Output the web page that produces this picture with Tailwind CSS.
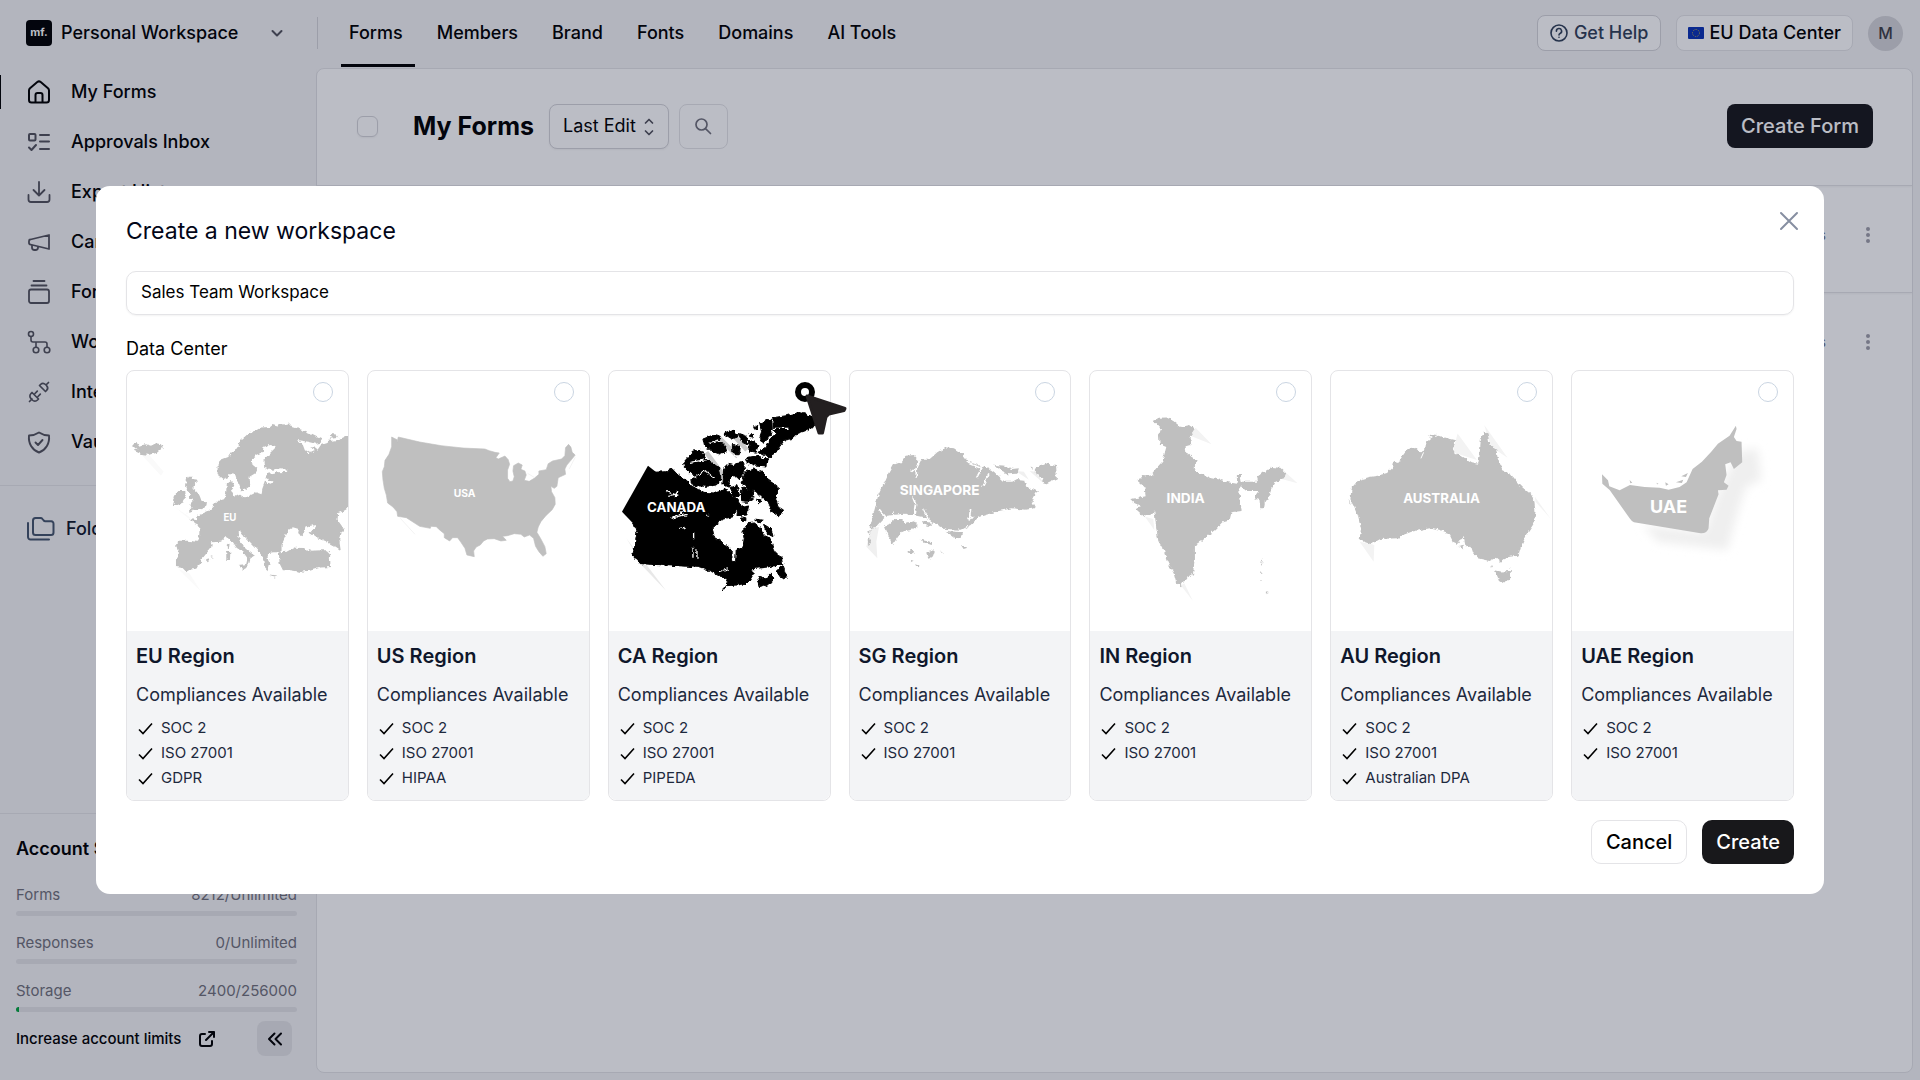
<!DOCTYPE html>
<html lang="en">

<head>
  <meta charset="UTF-8" />
  <meta name="viewport" content="width=device-width, initial-scale=1.0" />
  <title>My Forms - Create a new workspace</title>
  <script src="https://cdn.jsdelivr.net/npm/@tailwindcss/browser@4"></script>
</head>

<body class="font-['Inter',sans-serif] text-lg text-black bg-zinc-100">
  <div class="flex flex-col min-h-screen">
    <!-- Top bar -->
    <header class="flex items-center h-[68px] pb-[2px] shrink-0">
      <div class="flex items-center w-[317px] shrink-0 pl-[26px]">
        <span class="flex items-center justify-center size-[26px] rounded bg-black text-white text-[11px] font-bold">mf.</span>
        <button class="flex flex-1 items-center justify-between pl-[9px] pr-[32px] font-medium">
          <span>Personal Workspace</span>
          <svg class="size-4 text-zinc-600" viewBox="0 0 16 16" fill="none" stroke="currentColor" stroke-width="2" stroke-linecap="round" stroke-linejoin="round"><path d="M3.500 6 8 10.500 12.500 6" /></svg>
        </button>
      </div>
      <nav class="flex self-stretch items-center gap-[14px] font-medium">
        <span class="w-px h-8 bg-zinc-300 mr-[9px]"></span>
        <a href="#" class="relative pl-2 pr-3">Forms<span class="absolute left-0 right-0 top-[45px] h-[3px] bg-black"></span></a>
        <a href="#" class="pl-2 pr-3">Members</a>
        <a href="#" class="pl-2 pr-3">Brand</a>
        <a href="#" class="pl-2 pr-3">Fonts</a>
        <a href="#" class="pl-2 pr-3">Domains</a>
        <a href="#" class="pl-2 pr-3">AI Tools</a>
      </nav>
      <div class="flex items-center gap-[15px] ml-auto pr-[17px]">
        <button class="flex items-center gap-1.5 h-9 px-3 rounded-lg border border-zinc-300 bg-white text-slate-700 font-medium">
          <svg class="size-[18px]" viewBox="0 0 18 18" fill="none" stroke="currentColor" stroke-width="1.600" stroke-linecap="round"><circle cx="9" cy="9" r="8" /><path d="M6.400 7.200a2.600 2.600 0 1 1 3.700 2.300c-.8.400-1.100.8-1.100 1.400" /><path d="M9 13.200v.1" /></svg>
          Get Help
        </button>
        <button class="flex items-center gap-[5px] h-9 px-[11px] rounded-lg border border-zinc-200 bg-white font-medium">
          <svg class="w-4 h-3" viewBox="0 0 16 12"><rect width="16" height="12" rx="1" fill="#0b32b4" /><circle cx="8" cy="6" r="3.500" fill="none" stroke="#c9b44a" stroke-width="1" stroke-dasharray=".8 1.030" /></svg>
          EU Data Center
        </button>
        <span class="flex items-center justify-center size-[35px] rounded-full bg-zinc-300 text-base font-medium text-zinc-700">M</span>
      </div>
    </header>

    <div class="flex flex-1">
      <!-- Sidebar -->
      <aside class="flex flex-col w-[316px] shrink-0">
        <nav class="flex flex-col gap-4 pt-[7px] font-medium">
          <a href="#" class="flex items-center h-[34px] gap-5 pl-[26px] border-l border-black">
            <svg class="size-6" viewBox="0 0 24 24" fill="none" stroke="currentColor" stroke-width="2" stroke-linejoin="round"><path d="M2 10.500a3 3 0 0 1 1-2.200l7.300-6.200a2.600 2.600 0 0 1 3.400 0L21 8.300a3 3 0 0 1 1 2.200V20a2.500 2.500 0 0 1-2.500 2.500h-15A2.500 2.500 0 0 1 2 20z" /><path d="M8.500 22.500V15a2 2 0 0 1 2-2h3a2 2 0 0 1 2 2v7.500" /></svg>
            My Forms
          </a>
          <a href="#" class="flex items-center h-[34px] gap-5 pl-[27px]">
            <svg class="size-6 text-zinc-600" viewBox="0 0 24 24" fill="none" stroke="currentColor" stroke-width="2" stroke-linecap="round" stroke-linejoin="round"><rect x="2" y="4" width="6.500" height="6.500" rx="1" /><path d="M13 5h9M13 11.500h9M13 19h9M2 17.500l2.500 2.500 4.500-5" /></svg>
            Approvals Inbox
          </a>
          <a href="#" class="flex items-center h-[34px] gap-5 pl-[27px]">
            <svg class="size-6 text-zinc-600" viewBox="0 0 24 24" fill="none" stroke="currentColor" stroke-width="1.800" stroke-linecap="round" stroke-linejoin="round"><path d="M12 2v13M6.500 10l5.500 5.500 5.500-5.500M1.500 15v4.500A2.500 2.500 0 0 0 4 22h16a2.500 2.500 0 0 0 2.500-2.500V15" /></svg>
            Export History
          </a>
          <a href="#" class="flex items-center h-[34px] gap-5 pl-[27px]">
            <svg class="size-6 text-zinc-600" viewBox="0 0 24 24" fill="none" stroke="currentColor" stroke-width="1.800" stroke-linejoin="round"><path d="M22 5v14L3.500 14.500a1.500 1.500 0 0 1-1.500-1.500v-2a1.500 1.500 0 0 1 1.500-1.500zM5 15v2.500A2.500 2.500 0 0 0 7.500 20h1a2.500 2.500 0 0 0 2.500-2.500v-1" /></svg>
            Campaigns
          </a>
          <a href="#" class="flex items-center h-[34px] gap-5 pl-[27px]">
            <svg class="size-6 text-zinc-600" viewBox="0 0 24 24" fill="none" stroke="currentColor" stroke-width="1.800" stroke-linecap="round"><path d="M6.500 1h11M4.500 5.500h15" /><rect x="2" y="9.500" width="20" height="13.500" rx="2" /></svg>
            Form Templates
          </a>
          <a href="#" class="flex items-center h-[34px] gap-5 pl-[27px]">
            <svg class="size-6 text-zinc-600" viewBox="0 0 24 24" fill="none" stroke="currentColor" stroke-width="1.600" stroke-linecap="round"><circle cx="4" cy="4" r="2.500" /><circle cx="9" cy="20" r="2.800" /><circle cx="20" cy="20" r="2.800" /><path d="M4 6.500V10a2 2 0 0 0 2 2h12a2 2 0 0 1 2 2v3M9 12v5" /></svg>
            Workflows
          </a>
          <a href="#" class="flex items-center h-[34px] gap-5 pl-[27px]">
            <svg class="size-6 text-zinc-600" viewBox="0 0 24 24" fill="none" stroke="currentColor" stroke-width="1.700" stroke-linecap="round" stroke-linejoin="round"><path d="m2.500 21.500 2.500-2.500M5 12.500l6.500 6.500-1 1a3.600 3.600 0 0 1-5.200 0l-1.300-1.300a3.600 3.600 0 0 1 0-5.200zM8 13.500l2.300-2.300M11 16.500l2.300-2.300" /><path d="m21.500 2.500-2.500 2.500M12.500 5.500l6 6 1-1a3.600 3.600 0 0 0 0-5l-1-1a3.600 3.600 0 0 0-5 0z" /></svg>
            Integrations
          </a>
          <a href="#" class="flex items-center h-[34px] gap-5 pl-[27px]">
            <svg class="size-6 text-zinc-600" viewBox="0 0 24 24" fill="none" stroke="currentColor" stroke-width="1.900" stroke-linecap="round" stroke-linejoin="round"><path d="M12 2.500c3 2 6.500 3 10 3 .8 8-3 14.500-10 17C5 20 1.200 13.500 2 5.500c3.500 0 7-1 10-3zM8.500 12.500l2.500 2.500 4.500-5" /></svg>
            Vault
          </a>
        </nav>
        <div class="mt-[26px] pt-[26px] border-t border-zinc-200 font-medium text-slate-900">
          <a href="#" class="flex items-center h-[34px] gap-[11px] pl-[27px]">
            <svg class="w-7 h-6 text-slate-600" viewBox="0 0 28 24" fill="none" stroke="currentColor" stroke-width="2" stroke-linecap="round" stroke-linejoin="round"><path d="M6 3.500A2.500 2.500 0 0 1 8.500 1h5a2.500 2.500 0 0 1 2 1l1.200 1.500a2 2 0 0 0 1.500.7h6A2.500 2.500 0 0 1 26.500 7v8.500A2.500 2.500 0 0 1 24 18H8.500A2.500 2.500 0 0 1 6 15.500zM1 6v14a2.500 2.500 0 0 0 2.500 2.500H22" /></svg>
            Folders
          </a>
        </div>

        <div class="mt-auto pt-5 pl-4 pr-[19px] pb-6 border-t border-zinc-200 text-[15px]/[24px] text-zinc-500">
          <h2 class="text-lg/[30px] font-semibold text-black">Account Summary</h2>
          <div class="flex justify-between mt-[19px]"><span>Forms</span><span>8212/Unlimited</span></div>
          <div class="mt-1 h-[5px] rounded-full bg-zinc-200"></div>
          <div class="flex justify-between mt-[15px]"><span>Responses</span><span>0/Unlimited</span></div>
          <div class="mt-1 h-[5px] rounded-full bg-zinc-200"></div>
          <div class="flex justify-between mt-[15px]"><span>Storage</span><span>2400/256000</span></div>
          <div class="mt-1 h-[5px] rounded-full bg-zinc-200 overflow-hidden"><div class="h-full bg-green-600" style="width: 1%"></div></div>
          <div class="flex items-center mt-[9px] text-black">
            <a href="#" class="flex items-center gap-[18px] font-medium">
              Increase account limits
              <svg class="size-4" viewBox="0 0 16 16" fill="none" stroke="currentColor" stroke-width="2" stroke-linecap="round" stroke-linejoin="round"><path d="M6 3H3a2 2 0 0 0-2 2v8a2 2 0 0 0 2 2h8a2 2 0 0 0 2-2v-3M10 1h5v5M15 1 7 9" /></svg>
            </a>
            <button aria-label="Collapse sidebar" class="flex items-center justify-center size-[35px] ml-auto mr-[5px] rounded-lg bg-zinc-200">
              <svg class="size-4" viewBox="0 0 16 16" fill="none" stroke="currentColor" stroke-width="2" stroke-linecap="round" stroke-linejoin="round"><path d="M7.500 2.500 2 8l5.500 5.500M14 2.500 8.500 8l5.500 5.500" /></svg>
            </button>
          </div>
        </div>
      </aside>

      <!-- Form list -->
      <main class="flex-1 mr-[7px] mb-[7px] rounded-lg border border-zinc-200 bg-white">
        <div class="flex items-center h-[117px] pl-10 pr-[39px] pb-[2px] border-b border-zinc-200 shadow-xs">
          <input type="checkbox" aria-label="Select all forms" class="appearance-none size-[21px] rounded-md border border-zinc-300 shadow-xs" />
          <h1 class="ml-[35px] mr-[15px] text-[25px] font-bold">My Forms</h1>
          <div class="relative">
            <select aria-label="Sort by" class="appearance-none h-[45px] w-[120px] pl-[13px] rounded-lg border border-zinc-300 bg-white shadow-xs text-black">
              <option>Last Edit</option>
            </select>
            <svg class="absolute right-3 top-[14px] w-4 h-[18px] pointer-events-none text-zinc-600" viewBox="0 0 16 18" fill="none" stroke="currentColor" stroke-width="1.700" stroke-linecap="round" stroke-linejoin="round"><path d="m4.500 5 3.500-3.500L11.500 5M4.500 13l3.500 3.500 3.500-3.500" /></svg>
          </div>
          <button aria-label="Search" class="flex items-center justify-center w-[49px] h-[45px] ml-[10px] rounded-lg border border-zinc-200 text-zinc-500">
            <svg class="size-[18px]" viewBox="0 0 18 18" fill="none" stroke="currentColor" stroke-width="1.700" stroke-linecap="round"><circle cx="7.500" cy="7.500" r="5.500" /><path d="m11.800 11.800 4.700 4.700" /></svg>
          </button>
          <button class="h-11 px-[14px] ml-auto rounded-lg bg-zinc-900 text-white text-xl font-medium">Create Form</button>
        </div>
        <div class="flex items-center justify-end gap-[34px] h-[107px] pr-9 pb-2 border-b border-zinc-200 shadow-xs text-sm text-zinc-500">
          <span>3 Drafts</span>
          <button aria-label="More"><svg class="w-4 h-[18px] text-zinc-400" viewBox="0 0 16 18" fill="currentColor"><circle cx="8" cy="3" r="2" /><circle cx="8" cy="9" r="2" /><circle cx="8" cy="15" r="2" /></svg></button>
        </div>
        <div class="flex items-center justify-end gap-[34px] h-[106px] pr-9 pb-2 text-sm text-zinc-500">
          <span>1 Drafts</span>
          <button aria-label="More"><svg class="w-4 h-[18px] text-zinc-400" viewBox="0 0 16 18" fill="currentColor"><circle cx="8" cy="3" r="2" /><circle cx="8" cy="9" r="2" /><circle cx="8" cy="15" r="2" /></svg></button>
        </div>
      </main>
    </div>
  </div>

  <!-- Create workspace dialog -->
  <div class="fixed inset-0 z-50 flex items-center justify-center bg-[#091230]/28">
    <form role="dialog" aria-labelledby="dialogTitle" class="relative w-[90%] p-[30px] rounded-[14px] bg-white">
      <h2 id="dialogTitle" class="text-[23px]/[30px] text-slate-950">Create a new workspace</h2>
      <button type="button" aria-label="Close" class="absolute right-[25px] top-[25px] text-[#868fa1]">
        <svg class="size-5" viewBox="0 0 20 20" fill="none" stroke="currentColor" stroke-width="2" stroke-linecap="round"><path d="m2 2 16 16M18 2 2 18" /></svg>
      </button>
      <input type="text" aria-label="Workspace name" value="Sales Team Workspace" class="block w-full h-11 mt-[25px] px-[14px] pb-[2px] rounded-[10px] border border-zinc-200 shadow-xs outline-none text-[17px]" />

      <fieldset class="mt-5">
        <legend class="text-lg/[27px]">Data Center</legend>
        <div class="grid grid-cols-7 gap-[18px] mt-2 text-slate-800">
          <label class="relative flex flex-col rounded-lg border border-zinc-200 overflow-hidden">
            <input type="radio" name="region" class="absolute right-[15px] top-[11px] appearance-none size-5 rounded-full border border-slate-300 bg-white" />
            <svg class="w-full h-[260px]" viewBox="18 18 663 780" fill="#bfbfbf">
              <path d="M60 268 120 332 128 320 85 270ZM160 425 205 455 215 470ZM172 612 240 680 205 625Z" fill="#fafafa" />
              <g filter="url(#coast)">
                <path d="M32 243 48 234 55 245 75 238 90 242 105 235 120 238 125 248 108 263 85 270 60 267 40 258 50 252Z" />
                <path d="M200 335 216 335 212 345 228 347 220 362 214 368 228 378 236 392 242 408 258 410 256 425 240 432 218 434 200 442 212 428 205 420 215 408 208 400 205 385 198 375 192 360Z" />
                <path d="M175 378 193 378 194 392 188 412 170 420 156 420 160 405 157 392 168 388Z" />
                <path d="M690 208 655 224 630 228 622 222 645 219 650 208 625 207 630 215 620 234 600 240 590 254 585 248 572 247 578 258 566 265 552 256 546 240 528 225 560 230 585 236 600 233 603 220 575 207 540 193 515 186 508 178 490 180 485 175 470 184 455 180 448 186 420 187 405 196 385 202 375 212 360 225 348 250 330 264 322 276 300 284 290 295 290 330 305 342 320 336 332 325 342 326 348 345 360 376 375 373 388 362 386 335 408 322 408 310 393 298 393 285 405 270 425 262 428 246 445 240 460 243 462 250 445 266 428 286 430 308 448 315 480 310 500 314 496 321 468 322 436 328 434 338 455 350 450 356 432 350 424 372 422 388 404 382 370 398 356 388 338 392 330 375 340 362 334 348 318 354 315 385 312 400 295 405 280 420 262 438 240 448 228 453 230 466 205 462 212 470 230 478 236 490 234 518 228 530 200 527 170 527 165 537 171 560 165 585 165 606 185 609 197 622 210 614 230 611 245 580 270 548 273 532 300 530 318 516 332 525 347 548 367 562 380 580 376 597 352 600 372 612 384 600 390 576 402 572 382 558 368 545 355 522 350 506 358 498 368 512 388 532 402 546 412 558 426 577 430 604 440 616 444 600 450 598 440 580 442 564 462 562 482 562 482 540 492 518 504 494 516 487 534 492 532 504 540 514 552 504 548 492 568 483 585 480 575 496 566 503 590 520 620 532 645 545 660 556 655 522 668 490 650 465 652 444 668 438 690 425Z" />
                <path d="M474 562 500 560 522 548 548 549 570 557 600 556 618 556 628 566 627 585 631 606 600 608 572 616 540 621 510 616 486 616 476 596Z" />
                <path d="M318 538 326 536 324 552 317 550ZM316 562 328 560 327 584 316 585ZM352 600 374 602 370 613 358 607ZM448 632 470 635 460 638ZM254 584l9-4 2 6-8 3ZM268 576l6-2v4z" />
              </g>
              <text x="327" y="468" font-size="29" font-weight="700" fill="#fff" text-anchor="middle">EU</text>
            </svg>
            <div class="flex-1 px-[9px] py-[10px] bg-gray-100">
              <h3 class="text-xl/[30px] font-semibold text-slate-900">EU Region</h3>
              <p class="mt-[9px] leading-[30px]">Compliances Available</p>
              <ul class="mt-[5px] text-[15px]/[25px]">
                <li class="flex items-center gap-2"><svg class="size-4 mt-[3px] ml-px text-black" viewBox="0 0 16 16" fill="none" stroke="currentColor" stroke-width="1.600"><path d="M2 8.500 6 12.500 15 2.500" /></svg>SOC 2</li>
                <li class="flex items-center gap-2"><svg class="size-4 mt-[3px] ml-px text-black" viewBox="0 0 16 16" fill="none" stroke="currentColor" stroke-width="1.600"><path d="M2 8.500 6 12.500 15 2.500" /></svg>ISO 27001</li>
                <li class="flex items-center gap-2"><svg class="size-4 mt-[3px] ml-px text-black" viewBox="0 0 16 16" fill="none" stroke="currentColor" stroke-width="1.600"><path d="M2 8.500 6 12.500 15 2.500" /></svg>GDPR</li>
              </ul>
            </div>
          </label>

          <label class="relative flex flex-col rounded-lg border border-zinc-200 overflow-hidden">
            <input type="radio" name="region" class="absolute right-[15px] top-[11px] appearance-none size-5 rounded-full border border-slate-300 bg-white" />
            <svg class="w-full h-[260px]" viewBox="21 18 663 780" fill="#bfbfbf">
              <path d="M92 216 108 224 108 232 112 216Q240 250 372 252L385 257 402 262 415 264 405 278 412 282 432 273 442 284 446 298 440 315 440 340 447 350 456 348 460 335 456 318 458 302 472 294 484 300 480 313 492 318 496 330 490 346 505 349 520 340 534 328 534 318 556 314 562 296 575 288 602 282 612 272 614 248 623 238 630 246 634 262 643 270 630 286 618 300 612 312 614 328 592 338 588 364 580 370 570 364 572 380 582 398 583 418 574 434 555 452 540 470 532 486 528 502 540 522 552 545 556 566 546 574 534 560 524 544 518 520 506 510 490 516 480 508 460 506 440 512 425 514 436 526 420 528 400 521 380 522 368 528 358 540 346 546 338 558 340 575 318 570 312 550 300 532 290 518 275 518 266 528 250 518 250 506 235 494 226 485 210 484 208 490 176 484 136 458 110 454 108 440 96 426 80 414 76 390 70 370 66 345 64 320 70 305 72 286 84 268 92 245Z" stroke="#bfbfbf" stroke-width="2" stroke-linejoin="round" />
              <path d="m118 460 44 48M625 312l18-35M500 325l20 12" stroke="#f3f3f3" stroke-width="3" />
              <text x="311" y="396" font-size="31" font-weight="700" fill="#fff" text-anchor="middle">USA</text>
            </svg>
            <div class="flex-1 px-[9px] py-[10px] bg-gray-100">
              <h3 class="text-xl/[30px] font-semibold text-slate-900">US Region</h3>
              <p class="mt-[9px] leading-[30px]">Compliances Available</p>
              <ul class="mt-[5px] text-[15px]/[25px]">
                <li class="flex items-center gap-2"><svg class="size-4 mt-[3px] ml-px text-black" viewBox="0 0 16 16" fill="none" stroke="currentColor" stroke-width="1.600"><path d="M2 8.500 6 12.500 15 2.500" /></svg>SOC 2</li>
                <li class="flex items-center gap-2"><svg class="size-4 mt-[3px] ml-px text-black" viewBox="0 0 16 16" fill="none" stroke="currentColor" stroke-width="1.600"><path d="M2 8.500 6 12.500 15 2.500" /></svg>ISO 27001</li>
                <li class="flex items-center gap-2"><svg class="size-4 mt-[3px] ml-px text-black" viewBox="0 0 16 16" fill="none" stroke="currentColor" stroke-width="1.600"><path d="M2 8.500 6 12.500 15 2.500" /></svg>HIPAA</li>
              </ul>
            </div>
          </label>

          <label class="relative flex flex-col rounded-lg border border-zinc-200">
            <input type="radio" name="region" checked class="absolute right-[15px] top-[11px] appearance-none size-5 rounded-full border border-slate-300 bg-white checked:border-[6px] checked:border-black" />
            <!-- Pointer -->
            <svg class="absolute -right-[17px] top-[21px] z-10 w-[44px] h-[44px]" viewBox="0 0 44 44" fill="#231f20" stroke="#231f20" stroke-width="3" stroke-linejoin="round"><path d="M4 4 42 16.500 41 18.500 26 22 23 25 19.500 41 16 41Z" /></svg>
            <svg class="w-full h-[260px]" viewBox="8 18 663 780">
              <path d="M238 290 262 318M300 262l52 70M335 215l60 60M372 200l50 55" stroke="#c9c9c9" stroke-width="14" />
              <path d="M60 520 180 678 102 596 85 560Z" fill="#e8e8e8" />
              <g filter="url(#coast)" stroke="#000" stroke-width="3" stroke-linejoin="round">
                <path d="M140 322 175 320 198 312 215 330 240 345 255 362 290 382 325 384 345 378 358 372 372 385 392 402 405 425 388 440 378 455 352 462 335 475 318 490 322 512 345 530 368 548 378 560 376 588 388 590 390 555 410 548 414 520 410 498 424 476 445 474 462 488 472 512 490 520 500 545 508 562 525 575 530 598 505 602 470 612 440 630 425 655 395 660 362 662 348 678 364 650 340 632 316 620 284 606 102 596 80 570 84 548 92 505 80 465Z" />
                <path d="M232 292 262 258 285 256 298 280 320 295 340 310 345 345 330 360 300 364 262 362 252 345 268 335 252 325 235 308Z" />
                <path d="M290 222 325 208 345 214 335 228 355 240 362 260 340 270 318 262 308 250 295 245Z" />
                <path d="M350 205 380 194 395 215 378 222ZM378 238 402 245 400 268 380 262ZM396 205 422 215 425 240 408 232Z" />
                <path d="M352 312 366 298 388 302 385 325 366 352 372 368 350 358Z" />
                <path d="M388 296 412 292 415 320 398 345 384 332ZM372 368 392 362 400 392 385 396Z" />
                <path d="M418 320 445 312 470 322 485 345 512 362 515 385 508 398 515 425 532 435 520 455 498 440 488 415 470 400 452 382 425 372 406 350Z" />
                <path d="M405 368 438 376 440 398 424 412 406 410ZM396 425 428 420 422 450 392 452Z" />
                <path d="M420 278 455 272 485 285 482 303 445 300 425 296Z" />
                <path d="M460 175 492 162 498 190 490 215 472 235 460 218 466 200Z" />
                <path d="M500 158 540 152 578 142 612 152 630 162 625 182 600 196 575 205 560 220 535 225 520 245 505 268 488 278 470 268 455 262 480 245 492 225 508 205 500 188Z" />
                <path d="M430 225 455 238 450 262 428 258ZM445 182 455 185 450 195ZM428 205 442 208 440 220Z" />
                <path d="M472 478 495 492 500 515 482 505ZM445 462 470 466 462 474ZM405 458 420 462 412 470ZM448 402 468 408 458 414Z" />
                <path d="M455 640 490 625 505 640 492 655 462 668ZM510 618 530 602 542 636 525 640Z" />
              </g>
              <path d="M125 302 150 322 150 460 85 480 47 440Z" />
              <path d="M92 520 84 575 104 596 284 606 284 570Z" />
              <g stroke="#fff" fill="none" stroke-width="4" filter="url(#coast)">
                <path d="M250 292l52-8M265 338l30-22 30 24M502 190h45M310 235l35-8M385 270l60 35M182 380l25 10 8-12M186 394l30-4M196 460l45-12M208 455l26-18" />
                <path d="M262 505v18M260 548v30M272 556v22M340 620l25-8M220 490l15-3M300 450l8 4" />
                <path d="M440 615 480 610 512 606 500 622 488 625 478 640 458 632Z" fill="#fff" />
              </g>
              <text x="210" y="440" font-size="40" font-weight="700" fill="#fff" text-anchor="middle">CANADA</text>
            </svg>
            <div class="flex-1 px-[9px] py-[10px] rounded-b-lg bg-gray-100">
              <h3 class="text-xl/[30px] font-semibold text-slate-900">CA Region</h3>
              <p class="mt-[9px] leading-[30px]">Compliances Available</p>
              <ul class="mt-[5px] text-[15px]/[25px]">
                <li class="flex items-center gap-2"><svg class="size-4 mt-[3px] ml-px text-black" viewBox="0 0 16 16" fill="none" stroke="currentColor" stroke-width="1.600"><path d="M2 8.500 6 12.500 15 2.500" /></svg>SOC 2</li>
                <li class="flex items-center gap-2"><svg class="size-4 mt-[3px] ml-px text-black" viewBox="0 0 16 16" fill="none" stroke="currentColor" stroke-width="1.600"><path d="M2 8.500 6 12.500 15 2.500" /></svg>ISO 27001</li>
                <li class="flex items-center gap-2"><svg class="size-4 mt-[3px] ml-px text-black" viewBox="0 0 16 16" fill="none" stroke="currentColor" stroke-width="1.600"><path d="M2 8.500 6 12.500 15 2.500" /></svg>PIPEDA</li>
              </ul>
            </div>
          </label>

          <label class="relative flex flex-col rounded-lg border border-zinc-200 overflow-hidden">
            <input type="radio" name="region" class="absolute right-[15px] top-[11px] appearance-none size-5 rounded-full border border-slate-300 bg-white" />
            <svg class="w-full h-[260px]" viewBox="13 18 663 780" fill="#bfbfbf">
              <path d="M76 492 100 486 92 530 95 580 62 545ZM510 318l25 2 15 24ZM552 318l20 2 22 35Z" fill="#f0f0f0" />
              <g filter="url(#coast)">
                <path d="M142 300 165 292 180 272 205 270 218 284 250 284 275 262 300 247 325 250 352 268 370 290 402 302 428 308 450 325 478 350 500 350 515 342 535 344 542 365 560 372 578 380 565 395 560 415 568 430 540 434 500 430 460 438 400 456 375 480 348 494 300 492 265 474 245 458 215 452 175 446 125 452 110 464 90 486 72 490 85 440 98 390 115 355 128 325Z" />
                <path d="M118 485 150 462 170 462 178 474 205 466 218 482 200 494 168 500 140 540 132 520ZM232 468 262 474 258 486 238 480ZM300 498 350 502 345 520 328 518Z" />
                <path d="M446 300 480 302 500 312 520 310 515 326 490 328 470 318ZM568 308 600 294 632 304 634 340 598 357 585 335 568 325ZM552 310 562 306 560 316Z" />
                <path d="M222 524 262 532 258 540 228 530ZM242 562 268 556 262 574 252 582ZM182 562 198 554 208 566ZM208 598 222 602 216 610ZM284 555l8 14-4-2ZM196 585l8 2-8 4ZM346 540l20 8-12 4ZM64 500l12-6-4 14zM66 520l8-2 2 16-8 6z" />
              </g>
              <g stroke="#fff" fill="none" stroke-width="5" filter="url(#coast)">
                <path d="M225 282 212 308 198 320M212 308v30M202 398l8 20-6 35M100 435l20 25M232 432l15 30M375 432l-4 35M392 340l16-30-45-18M430 325l-18 38M140 440l10 16M365 460l20-2M572 385l-12 22" />
              </g>
              <text x="282" y="390" font-size="41" font-weight="700" fill="#fff" text-anchor="middle">SINGAPORE</text>
            </svg>
            <div class="flex-1 px-[9px] py-[10px] bg-gray-100">
              <h3 class="text-xl/[30px] font-semibold text-slate-900">SG Region</h3>
              <p class="mt-[9px] leading-[30px]">Compliances Available</p>
              <ul class="mt-[5px] text-[15px]/[25px]">
                <li class="flex items-center gap-2"><svg class="size-4 mt-[3px] ml-px text-black" viewBox="0 0 16 16" fill="none" stroke="currentColor" stroke-width="1.600"><path d="M2 8.500 6 12.500 15 2.500" /></svg>SOC 2</li>
                <li class="flex items-center gap-2"><svg class="size-4 mt-[3px] ml-px text-black" viewBox="0 0 16 16" fill="none" stroke="currentColor" stroke-width="1.600"><path d="M2 8.500 6 12.500 15 2.500" /></svg>ISO 27001</li>
              </ul>
            </div>
          </label>

          <label class="relative flex flex-col rounded-lg border border-zinc-200 overflow-hidden">
            <input type="radio" name="region" class="absolute right-[15px] top-[11px] appearance-none size-5 rounded-full border border-slate-300 bg-white" />
            <svg class="w-full h-[260px]" viewBox="15 18 663 780" fill="#bfbfbf">
              <path d="M332 188 380 238 316 212ZM605 325 638 355 590 342ZM180 455 205 462 208 495ZM288 662 298 655 324 708Z" fill="#f3f3f3" />
              <g filter="url(#coast)">
                <path d="M206 168 225 158 245 157 265 168 288 186 315 180 330 190 318 208 316 240 302 244 304 262 320 276 338 286 326 310 345 325 375 338 405 344 430 352 456 356 456 330 468 330 470 350 520 350 516 336 535 322 562 306 586 308 604 325 596 342 572 350 562 372 552 398 540 404 538 430 526 430 524 405 508 400 524 378 484 378 468 364 462 372 466 400 470 438 440 442 434 466 412 472 390 495 362 516 345 530 330 540 330 580 324 628 304 640 288 664 274 655 266 625 248 590 236 555 220 528 214 490 208 436 200 446 178 455 150 430 168 424 148 414 136 402 160 398 182 394 178 365 158 348 172 330 196 332 215 308 232 290 240 262 244 246 224 238 222 210 228 192Z" />
                <path d="M532 578 535 578 530 602 528 600ZM526 620h3v6h-3ZM546 680h4v6h-4ZM530 645h3v3h-3zM540 666h2v3h-2z" />
              </g>
              <text x="302" y="415" font-size="41" font-weight="700" fill="#fff" text-anchor="middle">INDIA</text>
            </svg>
            <div class="flex-1 px-[9px] py-[10px] bg-gray-100">
              <h3 class="text-xl/[30px] font-semibold text-slate-900">IN Region</h3>
              <p class="mt-[9px] leading-[30px]">Compliances Available</p>
              <ul class="mt-[5px] text-[15px]/[25px]">
                <li class="flex items-center gap-2"><svg class="size-4 mt-[3px] ml-px text-black" viewBox="0 0 16 16" fill="none" stroke="currentColor" stroke-width="1.600"><path d="M2 8.500 6 12.500 15 2.500" /></svg>SOC 2</li>
                <li class="flex items-center gap-2"><svg class="size-4 mt-[3px] ml-px text-black" viewBox="0 0 16 16" fill="none" stroke="currentColor" stroke-width="1.600"><path d="M2 8.500 6 12.500 15 2.500" /></svg>ISO 27001</li>
              </ul>
            </div>
          </label>

          <label class="relative flex flex-col rounded-lg border border-zinc-200 overflow-hidden">
            <input type="radio" name="region" class="absolute right-[15px] top-[11px] appearance-none size-5 rounded-full border border-slate-300 bg-white" />
            <svg class="w-full h-[260px]" viewBox="20 18 663 780" fill="#bfbfbf">
              <path d="M400 205 458 285 385 262ZM480 180 550 278 500 245ZM632 395 680 462 634 410ZM106 530 150 540 148 590Z" fill="#f3f3f3" />
              <g filter="url(#coast)">
                <path d="M102 346 135 336 160 332 188 324 202 312 206 290 222 294 234 274 250 252 270 246 288 262 302 256 306 232 322 218 345 212 370 220 396 226 384 256 410 274 440 292 462 296 466 270 470 220 480 200 490 205 496 240 516 254 522 285 534 316 560 328 578 350 596 368 618 386 630 404 634 440 626 480 606 510 590 545 582 572 550 576 530 590 515 578 496 588 460 580 444 562 438 542 424 544 418 516 400 536 386 530 374 505 350 496 325 489 300 492 262 500 236 510 222 520 168 522 140 538 106 526 110 490 102 455 88 420 78 402 82 368Z" />
                <path d="M512 616 530 620 560 618 558 638 540 656 526 650ZM310 210l14-2 16 2-14 6ZM400 546l20-4-6 8ZM500 600l5 6-3 2ZM555 602l6 6-4 2zM72 404l8 12-4-2z" />
              </g>
              <path d="m290 280 8-18M402 532l10-10" stroke="#fff" stroke-width="3" />
              <text x="352" y="413" font-size="40" font-weight="700" fill="#fff" text-anchor="middle">AUSTRALIA</text>
            </svg>
            <div class="flex-1 px-[9px] py-[10px] bg-gray-100">
              <h3 class="text-xl/[30px] font-semibold text-slate-900">AU Region</h3>
              <p class="mt-[9px] leading-[30px]">Compliances Available</p>
              <ul class="mt-[5px] text-[15px]/[25px]">
                <li class="flex items-center gap-2"><svg class="size-4 mt-[3px] ml-px text-black" viewBox="0 0 16 16" fill="none" stroke="currentColor" stroke-width="1.600"><path d="M2 8.500 6 12.500 15 2.500" /></svg>SOC 2</li>
                <li class="flex items-center gap-2"><svg class="size-4 mt-[3px] ml-px text-black" viewBox="0 0 16 16" fill="none" stroke="currentColor" stroke-width="1.600"><path d="M2 8.500 6 12.500 15 2.500" /></svg>ISO 27001</li>
                <li class="flex items-center gap-2"><svg class="size-4 mt-[3px] ml-px text-black" viewBox="0 0 16 16" fill="none" stroke="currentColor" stroke-width="1.600"><path d="M2 8.500 6 12.500 15 2.500" /></svg>Australian DPA</li>
              </ul>
            </div>
          </label>

          <label class="relative flex flex-col rounded-lg border border-zinc-200 overflow-hidden">
            <input type="radio" name="region" class="absolute right-[15px] top-[11px] appearance-none size-5 rounded-full border border-slate-300 bg-white" />
            <svg class="w-full h-[260px]" viewBox="22 18 663 780" fill="#bfbfbf">
              <path d="M520 260 580 250 590 345 545 365 520 440 488 555 280 530 235 480 420 500 460 385Z" fill="#efefef" filter="url(#soft)" />
              <path d="M112 328 130 346 134 364 165 376 196 360 240 366 285 368 312 374 345 366 366 352 384 312 412 290 440 260 460 236 495 212 514 182 516 192 508 216 516 228 531 230 533 292 508 312 498 292 482 298 486 330 478 352 492 362 486 374 460 376 462 388 434 460 432 490Q428 506 408 505L208 472Q200 468 195 460L135 375 113 356Z" />
              <path d="m334 352 22-8-4 10ZM350 334l20-10-6 12ZM195 345l8 8-6 2ZM302 352l10 6-8 4ZM276 353l6 4-5 1z" />
              <text x="312" y="445" font-size="54" font-weight="700" fill="#fff" text-anchor="middle">UAE</text>
            </svg>
            <div class="flex-1 px-[9px] py-[10px] bg-gray-100">
              <h3 class="text-xl/[30px] font-semibold text-slate-900">UAE Region</h3>
              <p class="mt-[9px] leading-[30px]">Compliances Available</p>
              <ul class="mt-[5px] text-[15px]/[25px]">
                <li class="flex items-center gap-2"><svg class="size-4 mt-[3px] ml-px text-black" viewBox="0 0 16 16" fill="none" stroke="currentColor" stroke-width="1.600"><path d="M2 8.500 6 12.500 15 2.500" /></svg>SOC 2</li>
                <li class="flex items-center gap-2"><svg class="size-4 mt-[3px] ml-px text-black" viewBox="0 0 16 16" fill="none" stroke="currentColor" stroke-width="1.600"><path d="M2 8.500 6 12.500 15 2.500" /></svg>ISO 27001</li>
              </ul>
            </div>
          </label>
        </div>
      </fieldset>

      <div class="flex justify-end gap-[15px] mt-[19px] text-xl font-medium">
        <button type="button" class="h-11 px-[14px] rounded-[10px] border border-zinc-200">Cancel</button>
        <button type="submit" class="h-11 px-[14px] rounded-[10px] bg-zinc-900 text-white">Create</button>
      </div>
    </form>
  </div>

  <!-- Shared filters for the maps -->
  <svg class="absolute size-0" aria-hidden="true">
    <filter id="coast" x="-5%" y="-5%" width="110%" height="110%" color-interpolation-filters="sRGB">
      <feTurbulence type="fractalNoise" baseFrequency="0.08" numOctaves="2" seed="4" result="noise" />
      <feDisplacementMap in="SourceGraphic" in2="noise" scale="14" xChannelSelector="R" yChannelSelector="G" />
    </filter>
    <filter id="soft" x="-20%" y="-20%" width="140%" height="140%">
      <feGaussianBlur stdDeviation="14" />
    </filter>
  </svg>
</body>

</html>
